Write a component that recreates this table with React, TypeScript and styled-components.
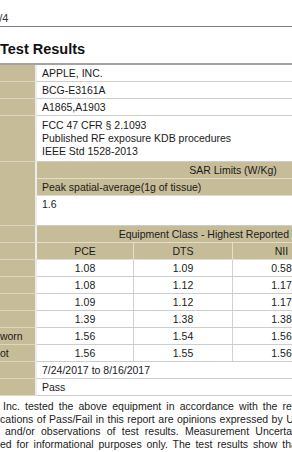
import React from 'react';
import styled, { createGlobalStyle, css } from 'styled-components';

const BEIGE = '#c7bc98';

const GlobalStyle = createGlobalStyle`
  html, body {
    margin: 0;
    padding: 0;
    background: #fff;
  }
  body {
    font-family: "Liberation Sans", Arial, sans-serif;
    color: #1a1a1a;
  }
`;

const Page = styled.div`
  width: 292px;
  height: 452px;
  overflow: hidden;
  background: #fff;
`;

const Header = styled.div`
  height: 26px;
  border-bottom: 1px solid #808080;
  display: flex;
`;

const PageNo = styled.div`
  width: 8.5px;
  margin-top: 12px;
  display: flex;
  justify-content: flex-end;
  white-space: nowrap;
  font-size: 11px;
  line-height: 13px;
  color: #333;
`;

const Title = styled.h1`
  margin: 13px 0 5px;
  font-size: 14.5px;
  line-height: 18px;
  font-weight: bold;
  color: #111;
`;

const Sheet = styled.div`
  margin-left: -109px;
`;

const Grid = styled.div`
  display: grid;
  grid-template-columns: 80px 66px 97px 99px 98px 98px;
  width: 538px;
  border-top: 2px solid #a3a3a3;
  font-size: 10.5px;
  line-height: 13px;
`;

const cellBase = css`
  box-sizing: border-box;
  min-height: 17px;
  padding: 1.5px 5px;
  white-space: nowrap;
  overflow: hidden;
`;

type Span = { $span?: number; $rows?: number };
type Cellish = Span & { $align?: 'left' | 'center'; $line?: boolean };

const Label = styled.div<Span>`
  ${cellBase}
  grid-column: span ${({ $span = 1 }) => $span};
  grid-row: span ${({ $rows = 1 }) => $rows};
  background: ${BEIGE};
  border-bottom: 1px solid #ddd6c0;
  border-right: 2px solid #ececec;
`;

const SubLabel = styled(Label)`
  padding-left: 1.5px;
`;

const Group = styled(Label)`
  border-right: 1px solid #d8d1ba;
`;

const Head = styled.div<Cellish>`
  ${cellBase}
  grid-column: span ${({ $span = 1 }) => $span};
  background: ${BEIGE};
  text-align: ${({ $align = 'left' }) => $align};
  border-bottom: 1px solid #e2ddcc;
  border-right: ${({ $line }) => ($line ? '1px solid #e4dfcf' : 'none')};
`;

const Value = styled.div<Cellish & { $minH?: number; $padTop?: number }>`
  ${cellBase}
  grid-column: span ${({ $span = 1 }) => $span};
  min-height: ${({ $minH = 17 }) => $minH}px;
  padding-top: ${({ $padTop = 1.5 }) => $padTop}px;
  background: #fff;
  text-align: ${({ $align = 'left' }) => $align};
  border-bottom: 1px solid #cdcdcd;
  border-right: ${({ $line }) => ($line ? '1px solid #d2d2d2' : 'none')};
`;

const Notes = styled.div`
  margin-top: 4px;
  font-size: 10.5px;
  line-height: 12.5px;
  color: #222;
`;

const NoteLine = styled.div<{ $shift: number; $spacing: number }>`
  white-space: nowrap;
  margin-left: ${({ $shift }) => $shift}px;
  word-spacing: ${({ $spacing }) => $spacing}px;
`;

const classes = ['PCE', 'DTS', 'NII', 'DSS'];

const results = [
  { label: 'Ear', values: ['1.08', '1.09', '0.58', '0.41'] },
  { label: 'Body', values: ['1.08', '1.12', '1.17', '0.62'] },
  { label: 'Lap', values: ['1.09', '1.12', '1.17', '0.62'] },
  { label: 'Limb', values: ['1.39', '1.38', '1.38', '0.77'] },
  { label: 'Body-worn', values: ['1.56', '1.54', '1.56', '0.81'] },
  { label: 'Hotspot', values: ['1.56', '1.55', '1.56', '0.81'] },
];

const notes = [
  { shift: 3, spacing: 2.2, text: 'Inc. tested the above equipment in accordance with the requirements set forth' },
  { shift: -16.3, spacing: 0.6, text: 'indications of Pass/Fail in this report are opinions expressed by UL' },
  { shift: 5, spacing: 3.3, text: 'and/or observations of test results. Measurement Uncertainties were' },
  { shift: -33.3, spacing: 1.9, text: 'published for informational purposes only. The test results show that' },
];

export default function App() {
  return (
    <Page>
      <GlobalStyle />
      <Header>
        <PageNo>Page 4/4</PageNo>
      </Header>
      <Title>Test Results</Title>
      <Sheet>
        <Grid>
          <Label $span={2}>Applicant</Label>
          <Value $span={4}>APPLE, INC.</Value>
          <Label $span={2}>FCC ID</Label>
          <Value $span={4}>BCG-E3161A</Value>
          <Label $span={2}>Model Name</Label>
          <Value $span={4}>A1865,A1903</Value>
          <Label $span={2}>Standards</Label>
          <Value $span={4} $minH={46} $padTop={3}>
            FCC 47 CFR § 2.1093
            <br />
            Published RF exposure KDB procedures
            <br />
            IEEE Std 1528-2013
          </Value>
          <Label $span={2} $rows={3}>Exposure Limit</Label>
          <Head $span={4} $align="center">SAR Limits (W/Kg)</Head>
          <Head $span={4}>Peak spatial-average(1g of tissue)</Head>
          <Value $span={4} $minH={30}>1.6</Value>
          <Group $rows={8}>Results</Group>
          <SubLabel />
          <Head $span={4} $align="center">Equipment Class - Highest Reported SAR (W/kg)</Head>
          <SubLabel />
          {classes.map((c, i) => (
            <Head key={c} $align="center" $line={i < classes.length - 1}>
              {c}
            </Head>
          ))}
          {results.map((r) => (
            <React.Fragment key={r.label}>
              <SubLabel>{r.label}</SubLabel>
              {r.values.map((v, i) => (
                <Value key={i} $align="center" $line={i < r.values.length - 1}>
                  {v}
                </Value>
              ))}
            </React.Fragment>
          ))}
          <Label $span={2}>Date Tested</Label>
          <Value $span={4}>7/24/2017 to 8/16/2017</Value>
          <Label $span={2}>Test Results</Label>
          <Value $span={4}>Pass</Value>
        </Grid>
      </Sheet>
      <Notes>
        {notes.map((n) => (
          <NoteLine key={n.text} $shift={n.shift} $spacing={n.spacing}>
            {n.text}
          </NoteLine>
        ))}
      </Notes>
    </Page>
  );
}
